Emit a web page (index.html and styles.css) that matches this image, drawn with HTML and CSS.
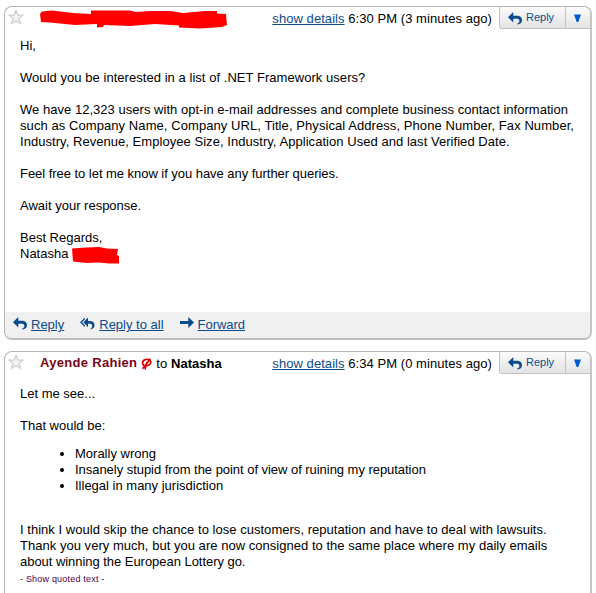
FILE: index.html
```
<!DOCTYPE html>
<html lang="en">
<head>
  <meta charset="UTF-8">
  <title>Conversation</title>
  <link rel="stylesheet" href="styles.css">
</head>
<body>

  <!-- Shared icons -->
  <svg class="sprite" width="0" height="0">
    <symbol id="star" viewBox="0 0 16 16">
      <path d="M8 1.3 L9.9 6 L14.7 6.2 L11 9.6 L12.5 14.4 L8 11.8 L3.5 14.4 L5 9.6 L1.3 6.2 L6.1 6 Z" fill="#f3f3f3" stroke="#d0d0d0" stroke-width="1.3"/>
    </symbol>
    <symbol id="reply" viewBox="0 0 14 13">
      <path d="M0 5.2 L5.3 0 V3.8 H8.5 C12.5 3.8 14 5.8 14 8.3 C14 10.7 12.3 12.2 9.3 12.5 V11.5 C11 10.8 11.7 9.8 11.3 8.5 C11 7.2 10 6.8 8.5 6.8 H5.3 V10.4 Z" fill="#0b4c8c"/>
    </symbol>
    <symbol id="reply-all" viewBox="0 0 16 13">
      <path d="M5.2 0 L0 5.2 L5.2 10.4 V8.5 L2.2 5.2 L5.2 2 Z" fill="#0b4c8c"/>
      <path d="M3.6 5.2 L8.5 0 V3.8 H10.5 C14 3.8 15.5 5.8 15.5 8.3 C15.5 10.7 14 12.2 11.5 12.5 V11.5 C12.7 10.8 13.3 9.8 12.9 8.5 C12.5 7.2 11.6 6.8 10.5 6.8 H8.5 V10.4 Z" fill="#0b4c8c"/>
    </symbol>
    <symbol id="forward" viewBox="0 0 14 11">
      <path d="M0 4 H8.3 V0 L14 5.5 L8.3 11 V7 H0 Z" fill="#0b4c8c"/>
    </symbol>
  </svg>

  <div class="message">
    <div class="header">
      <svg class="star"><use href="#star"/></svg>
      <svg class="scribble" width="188" height="20" viewBox="0 0 188 20">
        <path d="M2 1.5 L12 0.5 L33 3 L51 4 V0.5 L90 0.5 L96 2 L110 1 L130 1 L143 3 L165 1 L177 1 V3.5 L186 4 L187 15 L182 17 L160 18.5 L139 17.5 V15.5 L115 14 L90 16 L64 15 L63 17 L57 17.5 V14 L35 15 L10 12.5 L1 12 L0 4 Z" fill="#f00"/>
      </svg>
      <div class="time"><a href="#">show details</a> 6:30 PM (3 minutes ago)</div>
      <div class="actions">
        <button class="reply-btn"><svg class="reply-icon"><use href="#reply"/></svg>Reply</button>
        <button class="menu-btn"><svg width="7" height="8"><path d="M0 0.5 H7 L4.3 8 H2.7 Z" fill="#0059d0"/></svg></button>
      </div>
    </div>
    <div class="content first">
      <p>Hi,</p>
      <p class="loose">Would you be interested in a list of .NET Framework users?</p>
      <p><span class="slack">We have 12,323 users with opt-in e-mail addresses and complete business contact information</span><br>
        <span class="wide">such as Company Name, Company URL, Title, Physical Address, Phone Number, Fax Number,</span><br>
        <span class="loose">Industry, Revenue, Employee Size, Industry, Application Used and last Verified Date.</span></p>
      <p class="tight">Feel free to let me know if you have any further queries.</p>
      <p>Await your response.</p>
      <p>Best Regards,<br>
        Natasha <svg class="scribble-small" width="48" height="17" viewBox="0 0 48 17"><path d="M0 1.5 L14 0.5 L27 0 L35 1.5 L46 2 L45 8 L47 9 V16.5 L37 16.5 L27 15.5 L15 16 L1 14.5 Z" fill="#f00"/></svg></p>
    </div>
    <div class="footer">
      <svg class="reply-icon"><use href="#reply"/></svg><a href="#">Reply</a>
      <svg class="reply-all-icon"><use href="#reply-all"/></svg><a href="#">Reply to all</a>
      <svg class="forward-icon"><use href="#forward"/></svg><a class="tight" href="#">Forward</a>
    </div>
  </div>

  <div class="message last">
    <div class="header">
      <svg class="star"><use href="#star"/></svg>
      <div class="sender">
        <b class="name">Ayende Rahien</b>
        <svg class="offline" width="11" height="12" viewBox="0 0 11 12"><path d="M3.5 7.6 C0.5 6.6 0.8 1.8 5.5 1.3 C10 1 10.8 4.6 8.5 6.6 C7 7.8 5.5 8 3.5 7.6 M1.5 10.8 L9.5 0.8 M4 11.5 L6 4" fill="none" stroke="#d00" stroke-width="1.7"/></svg>
        <span>to <b>Natasha</b></span>
      </div>
      <div class="time"><a href="#">show details</a> 6:34 PM (0 minutes ago)</div>
      <div class="actions">
        <button class="reply-btn"><svg class="reply-icon"><use href="#reply"/></svg>Reply</button>
        <button class="menu-btn"><svg width="7" height="8"><path d="M0 0.5 H7 L4.3 8 H2.7 Z" fill="#0059d0"/></svg></button>
      </div>
    </div>
    <div class="content">
      <p>Let me see...</p>
      <p class="intro">That would be:</p>
      <ul>
        <li>Morally wrong</li>
        <li class="tight">Insanely stupid from the point of view of ruining my reputation</li>
        <li>Illegal in many jurisdiction</li>
      </ul>
      <p class="closing"><span class="slack">I think I would skip the chance to lose customers, reputation and have to deal with lawsuits.</span><br>
        <span class="slack">Thank you very much, but you are now consigned to the same place where my daily emails</span><br>
        <span class="tight">about winning the European Lottery go.</span></p>
      <div class="quoted">- Show quoted text -</div>
    </div>
  </div>

</body>
</html>
```
FILE: styles.css
```
body {
  margin: 0;
  padding: 6px 4px 0;
  height: 593px;
  overflow: hidden;
  box-sizing: border-box;
  background: #fff;
  color: #000;
  font: 13px/16px "Liberation Sans", Arial, sans-serif;
}

.sprite {
  position: absolute;
}

a {
  color: #0b4c8c;
}

.message {
  width: 588px;
  height: 334px;
  box-sizing: border-box;
  display: flex;
  flex-direction: column;
  border: 1px solid #b5b5b5;
  border-right-width: 2px;
  border-right-color: #c4c4c4;
  border-bottom: 2px solid #bdbdbd;
  border-radius: 8px;
  overflow: hidden;
}

.message.last {
  height: 270px;
  margin-top: 11px;
}

/* Letter spacing steps */
.tight {
  letter-spacing: -0.04px;
}

.slack {
  letter-spacing: 0.03px;
}

.loose {
  letter-spacing: 0.045px;
}

.wide {
  letter-spacing: 0.075px;
}

/* Header row */
.header {
  height: 30px;
  flex: none;
  display: flex;
  align-items: flex-start;
}

.star {
  width: 16px;
  height: 16px;
  margin: 2px 0 0 3px;
}

.scribble {
  margin: 3px 0 0 16px;
}

.sender {
  display: flex;
  margin: 3px 0 0 16px;
  white-space: pre;
}

.name {
  color: #790619;
  letter-spacing: 0.3px;
}

.sender span {
  margin-top: 1px;
  letter-spacing: 0.05px;
}

.offline {
  margin: 3px 4px 0 4px;
}

.time {
  margin: 4px 7px 0 auto;
  white-space: nowrap;
  letter-spacing: 0.06px;
}

.actions {
  display: flex;
  height: 21px;
  border: 1px solid #c2c2c2;
  border-width: 0 0 1px 1px;
  border-bottom-left-radius: 3px;
  overflow: hidden;
}

.actions button {
  display: flex;
  align-items: center;
  border: 0;
  padding: 0;
  background: linear-gradient(#fbfbfb, #e3e3e3);
  color: #0b4c8c;
  font: 11px/16px "Liberation Sans", Arial, sans-serif;
}

.actions .reply-btn {
  width: 65px;
  padding: 0 0 1px 8px;
}

.reply-btn .reply-icon {
  margin: 3px 4px 0 0;
}

.actions .menu-btn {
  width: 25px;
  padding-right: 1px;
  justify-content: center;
  border-left: 1px solid #c2c2c2;
}

/* Message text */
.content {
  flex: 1;
  padding: 4px 0 0 15px;
  white-space: nowrap;
}

.content.first {
  padding-top: 1px;
}

p {
  margin: 0 0 16px;
}

.content .intro {
  margin-bottom: 12px;
}

.scribble-small {
  margin: 0 0 -6px;
  vertical-align: baseline;
}

ul {
  margin: 0 0 28px;
  padding-left: 55px;
}

.content .closing {
  margin-bottom: 2px;
}

.quoted {
  color: #500050;
  font-size: 9px;
  line-height: 14px;
  letter-spacing: 0.2px;
}

/* Reply links */
.footer {
  height: 26px;
  flex: none;
  display: flex;
  padding-left: 8px;
  align-items: flex-start;
  background: #f0f0f0;
}

.footer a {
  margin: 5px 16px 0 4px;
}

.reply-icon {
  width: 14px;
  height: 13px;
}

.reply-all-icon {
  width: 15px;
  height: 13px;
}

.forward-icon {
  width: 14px;
  height: 11px;
}

.footer svg {
  margin-top: 5px;
}
```
